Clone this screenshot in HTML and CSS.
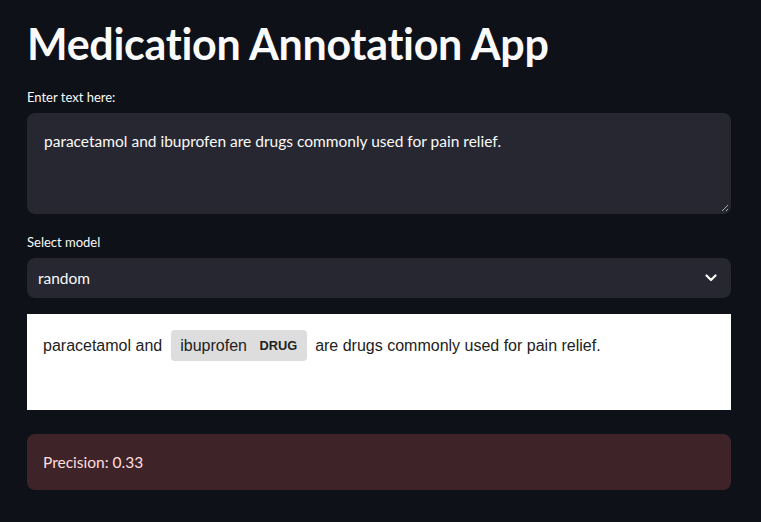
FILE: index.html
```html
<!DOCTYPE html>
<html>
<head>
<meta charset="utf-8">
<link rel="stylesheet" href="styles.css">
</head>
<body>
<main class="app">
  <h1 class="title">Medication Annotation App</h1>
  <div class="field">
    <label class="label">Enter text here:</label>
    <div class="textarea">paracetamol and ibuprofen are drugs commonly used for pain relief.<span class="grip"></span></div>
  </div>
  <div class="field">
    <label class="label">Select model</label>
    <div class="select">
      <span>random</span>
      <svg class="chev" width="12" height="8" viewBox="0 0 12 8"><path d="M1.5 1.5 L6 6 L10.5 1.5" fill="none" stroke="#fafafa" stroke-width="2.2" stroke-linecap="round" stroke-linejoin="round"/></svg>
    </div>
  </div>
  <div class="displacy">paracetamol and <mark class="ent">ibuprofen <span class="ent-label">DRUG</span></mark> are drugs commonly used for pain relief.</div>
  <div class="alert">Precision: 0.33</div>
</main>
</body>
</html>
```
FILE: styles.css
```css
html, body {
  margin: 0;
  padding: 0;
  background: #0e1117;
}
body {
  font-family: "Lato", "Open Sans", sans-serif;
  color: #fafafa;
}
.app {
  width: 704px;
  margin-left: 27px;
  padding-top: 17px;
  display: flex;
  flex-direction: column;
}
.title {
  margin: 0;
  font-size: 43px;
  font-weight: 700;
  line-height: 54px;
  letter-spacing: -0.3px;
  color: #fafafa;
  padding-bottom: 17px;
}
.field {
  display: flex;
  flex-direction: column;
  margin-bottom: 16px;
}
.field:first-of-type {
  margin-bottom: 19px;
}
.label {
  font-size: 13px;
  line-height: 18px;
  color: #fafafa;
  margin-bottom: 7px;
}
.textarea {
  position: relative;
  box-sizing: border-box;
  height: 101px;
  background: #262730;
  border-radius: 8px;
  padding: 17px 17px;
  font-size: 15.5px;
  line-height: 22px;
  color: #fafafa;
}
.grip {
  position: absolute;
  right: 3px;
  bottom: 3px;
  width: 6px;
  height: 6px;
  background: linear-gradient(135deg, transparent 45%, #aaa 45%, #aaa 55%, transparent 55%, transparent 75%, #aaa 75%, #aaa 85%, transparent 85%);
}
.select {
  box-sizing: border-box;
  height: 40px;
  background: #262730;
  border-radius: 8px;
  padding: 0 14px 0 11px;
  display: flex;
  align-items: center;
  justify-content: space-between;
  font-size: 15.5px;
}
.chev {
  display: block;
}
.displacy {
  box-sizing: border-box;
  height: 96px;
  background: #ffffff;
  color: #222;
  font-family: "Liberation Sans", Arial, sans-serif;
  font-size: 16px;
  line-height: 2.5;
  padding: 12px 16px 7px;
  margin-top: 0;
}
.ent {
  background: #ddd;
  color: #222;
  padding: 0.45em 0.6em;
  margin: 0 0.25em;
  line-height: 1;
  border-radius: 0.25em;
}
.ent-label {
  font-size: 0.8em;
  font-weight: bold;
  line-height: 1;
  vertical-align: middle;
  margin-left: 0.5rem;
}
.alert {
  margin-top: 24px;
  box-sizing: border-box;
  height: 56px;
  background: #3e2428;
  border-radius: 8px;
  padding: 0 16px;
  display: flex;
  align-items: center;
  font-size: 15.5px;
  color: #ffdede;
}
```
